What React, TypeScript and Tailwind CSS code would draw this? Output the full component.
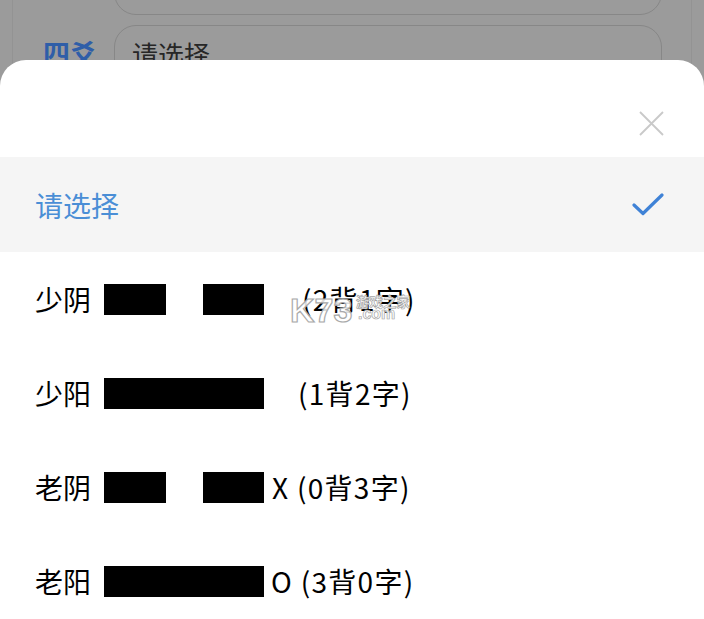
import React from "react";

const font = { fontFamily: '"Noto Sans CJK SC", "Noto Sans", sans-serif' };
const latin = { fontFamily: '"Liberation Sans", Arial, sans-serif' };

function Bar({ w }: { w: number }) {
  return <div className="h-[31px] bg-black shrink-0" style={{ width: w }} />;
}

function SplitBar() {
  return (
    <div className="flex gap-[37px] shrink-0">
      <Bar w={62} />
      <Bar w={61} />
    </div>
  );
}

function Row({ children }: { children: React.ReactNode }) {
  return (
    <div className="h-[94px] shrink-0 flex items-center pl-[35px] text-[28px] leading-none text-black">
      {children}
    </div>
  );
}

export default function App() {
  return (
    <div className="relative w-[704px] h-[619px] overflow-hidden bg-[#9b9b9b]" style={font}>
      {/* background page */}
      <div className="mx-[12px] h-full border-l border-r border-[#939393] flex flex-col gap-[10px]">
        <div className="ml-[101px] mr-[29px] mt-[-40px] h-[55px] shrink-0 rounded-[22px] border border-[#878787]" />
        <div className="flex items-start">
          <div className="w-[101px] pl-[30px] pt-[14px] text-[27px] leading-none font-bold text-[#2f5ea8]">四爻</div>
          <div className="flex-1 mr-[29px] h-[60px] rounded-[22px] border border-[#878787] pl-[17px] pt-[15px] text-[26px] leading-none text-[#262626]">
            请选择
          </div>
        </div>
      </div>

      {/* bottom sheet */}
      <div className="absolute left-0 right-0 top-[60px] bottom-0 bg-white rounded-t-[26px] flex flex-col">
        <div className="h-[97px] shrink-0 flex items-start justify-end pt-[51px] pr-[40px]">
          <svg width="25" height="25" viewBox="0 0 25 25">
            <path d="M1 1L24 24M24 1L1 24" stroke="#c9c9c9" strokeWidth="1.8" fill="none" />
          </svg>
        </div>
        <div className="h-[95px] shrink-0 bg-[#f5f5f5] flex items-center justify-between pl-[35px] pr-[40px]">
          <span className="text-[28px] leading-none text-[#4a8ed6]">请选择</span>
          <svg width="32" height="23" viewBox="0 0 32 23">
            <path d="M2 12L11 20.5L30 2" stroke="#3f82d6" strokeWidth="3.2" fill="none" strokeLinecap="round" strokeLinejoin="round" />
          </svg>
        </div>

        <Row>
          <span className="w-[69px] shrink-0">少阴</span>
          <SplitBar />
          <span className="ml-[38px] tracking-[1.3px]">(2背1字)</span>
        </Row>
        <Row>
          <span className="w-[69px] shrink-0">少阳</span>
          <Bar w={160} />
          <span className="ml-[34px] tracking-[1.3px]">(1背2字)</span>
        </Row>
        <Row>
          <span className="w-[69px] shrink-0">老阴</span>
          <SplitBar />
          <span className="ml-[8px] tracking-[1.3px]">X (0背3字)</span>
        </Row>
        <Row>
          <span className="w-[69px] shrink-0">老阳</span>
          <Bar w={160} />
          <span className="ml-[7px] tracking-[1.3px]">O (3背0字)</span>
        </Row>
      </div>

      {/* watermark */}
      <span
        className="absolute left-[290px] top-[293px] text-[34px] leading-none font-bold text-white/85 [-webkit-text-stroke:1.2px_#a9a9a9] pointer-events-none"
        style={latin}
      >
        K73
      </span>
      <span className="absolute left-[356px] top-[295px] text-[13.5px] leading-none font-bold text-white/90 [-webkit-text-stroke:0.7px_#a5a5a5] pointer-events-none">
        游戏之家
      </span>
      <span
        className="absolute left-[358px] top-[306px] text-[16px] leading-none font-bold text-white/90 [-webkit-text-stroke:0.7px_#a5a5a5] pointer-events-none"
        style={latin}
      >
        .com
      </span>
    </div>
  );
}
